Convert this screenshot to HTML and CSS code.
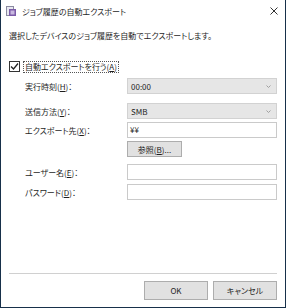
FILE: index.html
```html
<!DOCTYPE html>
<html lang="ja">
  <head>
    <meta charset="UTF-8" />
    <title>ジョブ履歴の自動エクスポート</title>
    <link rel="stylesheet" href="styles.css">
  </head>
  <body>
    <div class="window">
      <!-- Title bar -->
      <div class="titlebar">
        <svg class="app-icon" width="11" height="11" viewBox="0 0 11 11">
          <rect x="0.5" y="0.5" width="7" height="9" fill="#e8e8f0" stroke="#8a8aa0" />
          <rect x="3" y="3" width="7" height="7" fill="#7b5ba8" />
          <rect x="4.5" y="4.5" width="4" height="4" fill="#c9b8e0" />
        </svg>
        <span class="title">ジョブ履歴の自動エクスポート</span>
        <svg class="close" width="8" height="8" viewBox="0 0 8 8">
          <path d="M0.5 0.5 L7.5 7.5 M7.5 0.5 L0.5 7.5" stroke="#333" stroke-width="1" />
        </svg>
      </div>

      <div class="content">
        <p class="desc">選択したデバイスのジョブ履歴を自動でエクスポートします。</p>

        <label class="check-row">
          <span class="checkbox">
            <svg width="9" height="9" viewBox="0 0 9 9">
              <path d="M1 4.5 L3.5 7 L8 1.5" fill="none" stroke="#222" stroke-width="1.3" />
            </svg>
          </span>
          <span class="check-label">自動エクスポートを行う(<u>A</u>)</span>
        </label>

        <div class="form">
          <div class="row row-time">
            <span class="label">実行時刻(<u>H</u>)：</span>
            <div class="combo">
              <span>00:00</span>
              <svg class="arrow" width="5" height="3" viewBox="0 0 5 3"><path d="M0.5 0.5 L2.5 2.5 L4.5 0.5" fill="none" stroke="#a0a0a0" stroke-width="1" /></svg>
            </div>
          </div>
          <div class="row row-method">
            <span class="label">送信方法(<u>Y</u>)：</span>
            <div class="combo">
              <span>SMB</span>
              <svg class="arrow" width="5" height="3" viewBox="0 0 5 3"><path d="M0.5 0.5 L2.5 2.5 L4.5 0.5" fill="none" stroke="#a0a0a0" stroke-width="1" /></svg>
            </div>
          </div>
          <div class="row row-dest">
            <span class="label">エクスポート先(<u>X</u>)：</span>
            <div class="textbox">¥¥</div>
          </div>
          <div class="row row-browse">
            <span class="label"></span>
            <button class="btn browse">参照(<u>B</u>)...</button>
          </div>
          <div class="row row-user">
            <span class="label">ユーザー名(<u>E</u>)：</span>
            <div class="textbox"></div>
          </div>
          <div class="row row-pass">
            <span class="label">パスワード(<u>D</u>)：</span>
            <div class="textbox"></div>
          </div>
        </div>
      </div>

      <div class="footer">
        <hr class="sep" />
        <div class="buttons">
          <button class="btn action">OK</button>
          <button class="btn action">キャンセル</button>
        </div>
      </div>
    </div>
  </body>
</html>
```

FILE: styles.css
```css
body {
  margin: 0;
  background: #fff;
  color: #1e1e1e;
  font-family: "Noto Sans CJK JP", "Liberation Sans", sans-serif;
  font-size: 8px;
  font-feature-settings: "palt";
}
u {
  text-decoration: underline;
  text-underline-offset: 1px;
}
.window {
  width: 286px;
  height: 308px;
  box-sizing: border-box;
  border: 1px solid #17304a;
  border-top: none;
  display: flex;
  flex-direction: column;
  background: #fff;
}
.titlebar {
  height: 22px;
  display: flex;
  align-items: center;
  padding: 0 7px 0 5px;
}
.app-icon {
  margin-right: 5px;
}
.title {
  flex: 1;
}
.content {
  flex: 1;
  padding: 0 8px;
}
.desc {
  margin: 9px 0 0;
  line-height: 10px;
}
.check-row {
  display: flex;
  align-items: center;
  margin-top: 20px;
  height: 11px;
}
.checkbox {
  width: 9px;
  height: 9px;
  border: 1px solid #333;
  display: flex;
  align-items: center;
  justify-content: center;
  margin-right: 4px;
}
.check-label {
  outline: 1px dotted #555;
  padding: 0 1px;
  line-height: 10px;
}
.form {
  padding-left: 16px;
}
.row {
  display: flex;
  align-items: center;
  height: 16px;
}
.row-time { margin-top: 6px; }
.row-method { margin-top: 9px; }
.row-dest { margin-top: 3px; }
.row-browse { margin-top: 3px; }
.row-user { margin-top: 7px; }
.row-pass { margin-top: 4px; }
.label {
  width: 102px;
  flex: none;
}
.combo {
  width: 150px;
  height: 16px;
  box-sizing: border-box;
  background: #e6e6e6;
  border: 1px solid #d2d2d2;
  display: flex;
  align-items: center;
  justify-content: space-between;
  padding: 0 5px 0 3px;
}
.textbox {
  width: 150px;
  height: 16px;
  box-sizing: border-box;
  border: 1px solid #cacaca;
  background: #fff;
  padding: 0 2px;
  line-height: 14px;
}
.btn {
  font: inherit;
  color: inherit;
  background: #e1e1e1;
  border: 1px solid #adadad;
  padding: 0;
  box-sizing: border-box;
}
.browse {
  width: 55px;
  height: 16px;
}
.footer {
  padding: 0 8px 7px;
}
.sep {
  margin: 0;
  border: none;
  border-top: 1px solid #d0d0d0;
}
.buttons {
  display: flex;
  justify-content: flex-end;
  gap: 5px;
  margin-top: 7px;
}
.action {
  width: 64px;
  height: 19px;
}
```
